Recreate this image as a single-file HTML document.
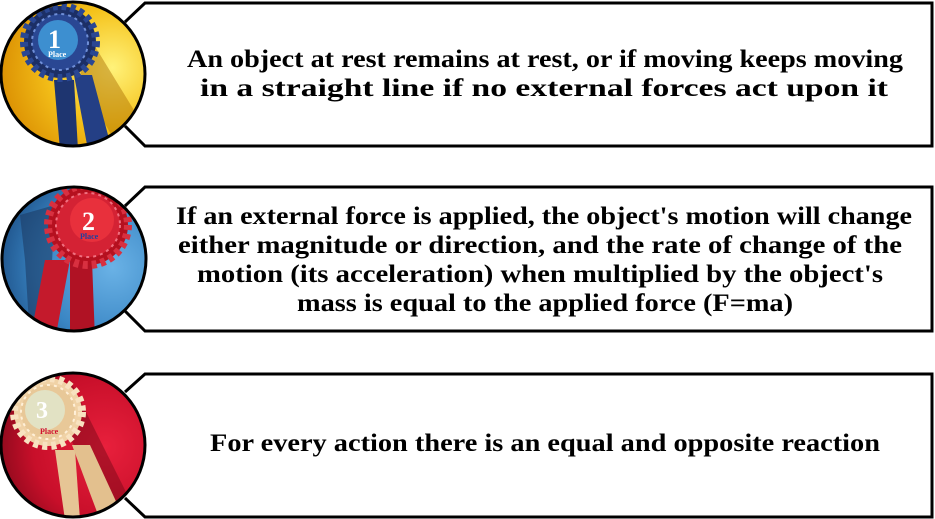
<!DOCTYPE html>
<html><head><meta charset="utf-8"><style>
html,body{margin:0;padding:0;background:#fff;width:935px;height:519px;overflow:hidden}
svg{display:block}
text{font-family:"Liberation Serif","DejaVu Serif",serif;font-weight:bold;font-size:25px;fill:#000}
</style></head><body>
<svg width="935" height="519" viewBox="0 0 935 519" xmlns="http://www.w3.org/2000/svg">
<defs>
<radialGradient id="g1" cx="0.75" cy="0.45" r="0.8"><stop offset="0" stop-color="#fff27a"/><stop offset="0.5" stop-color="#f5c21a"/><stop offset="1" stop-color="#d88a00"/></radialGradient>
<radialGradient id="g2" cx="0.75" cy="0.55" r="0.8"><stop offset="0" stop-color="#6ab2e6"/><stop offset="0.6" stop-color="#3a86c4"/><stop offset="1" stop-color="#1d4f86"/></radialGradient>
<radialGradient id="g3" cx="0.7" cy="0.5" r="0.8"><stop offset="0" stop-color="#e8203c"/><stop offset="0.6" stop-color="#c80f2a"/><stop offset="1" stop-color="#7a0818"/></radialGradient>
<clipPath id="c1"><circle cx="73" cy="74" r="72"/></clipPath>
<clipPath id="c2"><circle cx="74" cy="259" r="72"/></clipPath>
<clipPath id="c3"><circle cx="73" cy="445" r="72"/></clipPath>
</defs>
<g fill="#fff" stroke="#000" stroke-width="3">
<path d="M125,22 L145,3 L932,3 L932,146 L145,146 L125,126"/>
<path d="M125,206 L145,187 L932,187 L932,331 L145,331 L125,311"/>
<path d="M125,392 L145,374 L932,374 L932,517 L145,517 L125,498"/>
</g>
<g clip-path="url(#c1)">
<rect x="0" y="0" width="150" height="150" fill="url(#g1)"/>
<path d="M85,30 L140,120 L120,150 L80,80Z" fill="#a86a00" opacity="0.45"/>
<path d="M54,80 L74,80 L78,150 L60,150Z" fill="#1e3570"/>
<path d="M74,75 L92,75 L112,150 L88,150Z" fill="#243f85"/>
<circle cx="60" cy="42" r="36" fill="#1c2f66" stroke="#2a4793" stroke-width="8" stroke-dasharray="5 4"/>
<circle cx="60" cy="42" r="28" fill="#2a4793" stroke="#6f8fd8" stroke-width="2" stroke-dasharray="3 4"/>
<circle cx="58" cy="40" r="20" fill="#3d8fd0"/>
<text x="48" y="48" style="font-size:26px;fill:#fff">1</text>
<text x="48" y="57" style="font-size:8px;fill:#fff">Place</text>
</g>
<circle cx="73" cy="74" r="72" fill="none" stroke="#000" stroke-width="3"/>
<g clip-path="url(#c2)">
<rect x="0" y="185" width="150" height="150" fill="url(#g2)"/>
<path d="M20,215 L55,205 L50,300 L30,340 L25,260Z" fill="#1c3c66" opacity="0.6"/>
<path d="M45,260 L70,260 L55,340 L30,340Z" fill="#c41a2c"/>
<path d="M70,260 L92,260 L95,340 L70,340Z" fill="#b01224"/>
<circle cx="88" cy="225" r="40" fill="#b5101f" stroke="#d83040" stroke-width="8" stroke-dasharray="5 4"/>
<circle cx="88" cy="225" r="32" fill="#d42234" stroke="#f07080" stroke-width="2" stroke-dasharray="3 4"/>
<circle cx="92" cy="220" r="22" fill="#e8303c"/>
<text x="82" y="230" style="font-size:26px;fill:#fff">2</text>
<text x="80" y="239" style="font-size:8px;fill:#2040a0">Place</text>
</g>
<circle cx="74" cy="259" r="72" fill="none" stroke="#000" stroke-width="3"/>
<g clip-path="url(#c3)">
<rect x="0" y="372" width="150" height="150" fill="url(#g3)"/>
<path d="M70,380 L130,500 L115,520 L60,420Z" fill="#7a0818" opacity="0.5"/>
<path d="M55,450 L75,450 L80,520 L65,520Z" fill="#e6c595"/>
<path d="M72,445 L90,445 L120,510 L100,520Z" fill="#e3c08e"/>
<circle cx="48" cy="412" r="34" fill="#f0d2a6" stroke="#f8e2c0" stroke-width="8" stroke-dasharray="5 4"/>
<circle cx="48" cy="412" r="27" fill="#e8c898" stroke="#fff0d8" stroke-width="2" stroke-dasharray="3 4"/>
<circle cx="45" cy="410" r="20" fill="#e2e2c4"/>
<text x="36" y="418" style="font-size:24px;fill:#fff">3</text>
<text x="40" y="434" style="font-size:8px;fill:#d01030">Place</text>
</g>
<circle cx="73" cy="445" r="72" fill="none" stroke="#000" stroke-width="3"/>
<text x="187" y="67" textLength="716" lengthAdjust="spacingAndGlyphs">An object at rest remains at rest, or if moving keeps moving</text>
<text x="200" y="96" textLength="688" lengthAdjust="spacingAndGlyphs">in a straight line if no external forces act upon it</text>
<text x="176" y="224" textLength="736" lengthAdjust="spacingAndGlyphs">If an external force is applied, the object's motion will change</text>
<text x="178" y="253" textLength="724" lengthAdjust="spacingAndGlyphs">either magnitude or direction, and the rate of change of the</text>
<text x="197" y="282" textLength="686" lengthAdjust="spacingAndGlyphs">motion (its acceleration) when multiplied by the object's</text>
<text x="297" y="311" textLength="496" lengthAdjust="spacingAndGlyphs">mass is equal to the applied force (F=ma)</text>
<text x="210" y="451" textLength="670" lengthAdjust="spacingAndGlyphs">For every action there is an equal and opposite reaction</text>
</svg>
</body></html>
